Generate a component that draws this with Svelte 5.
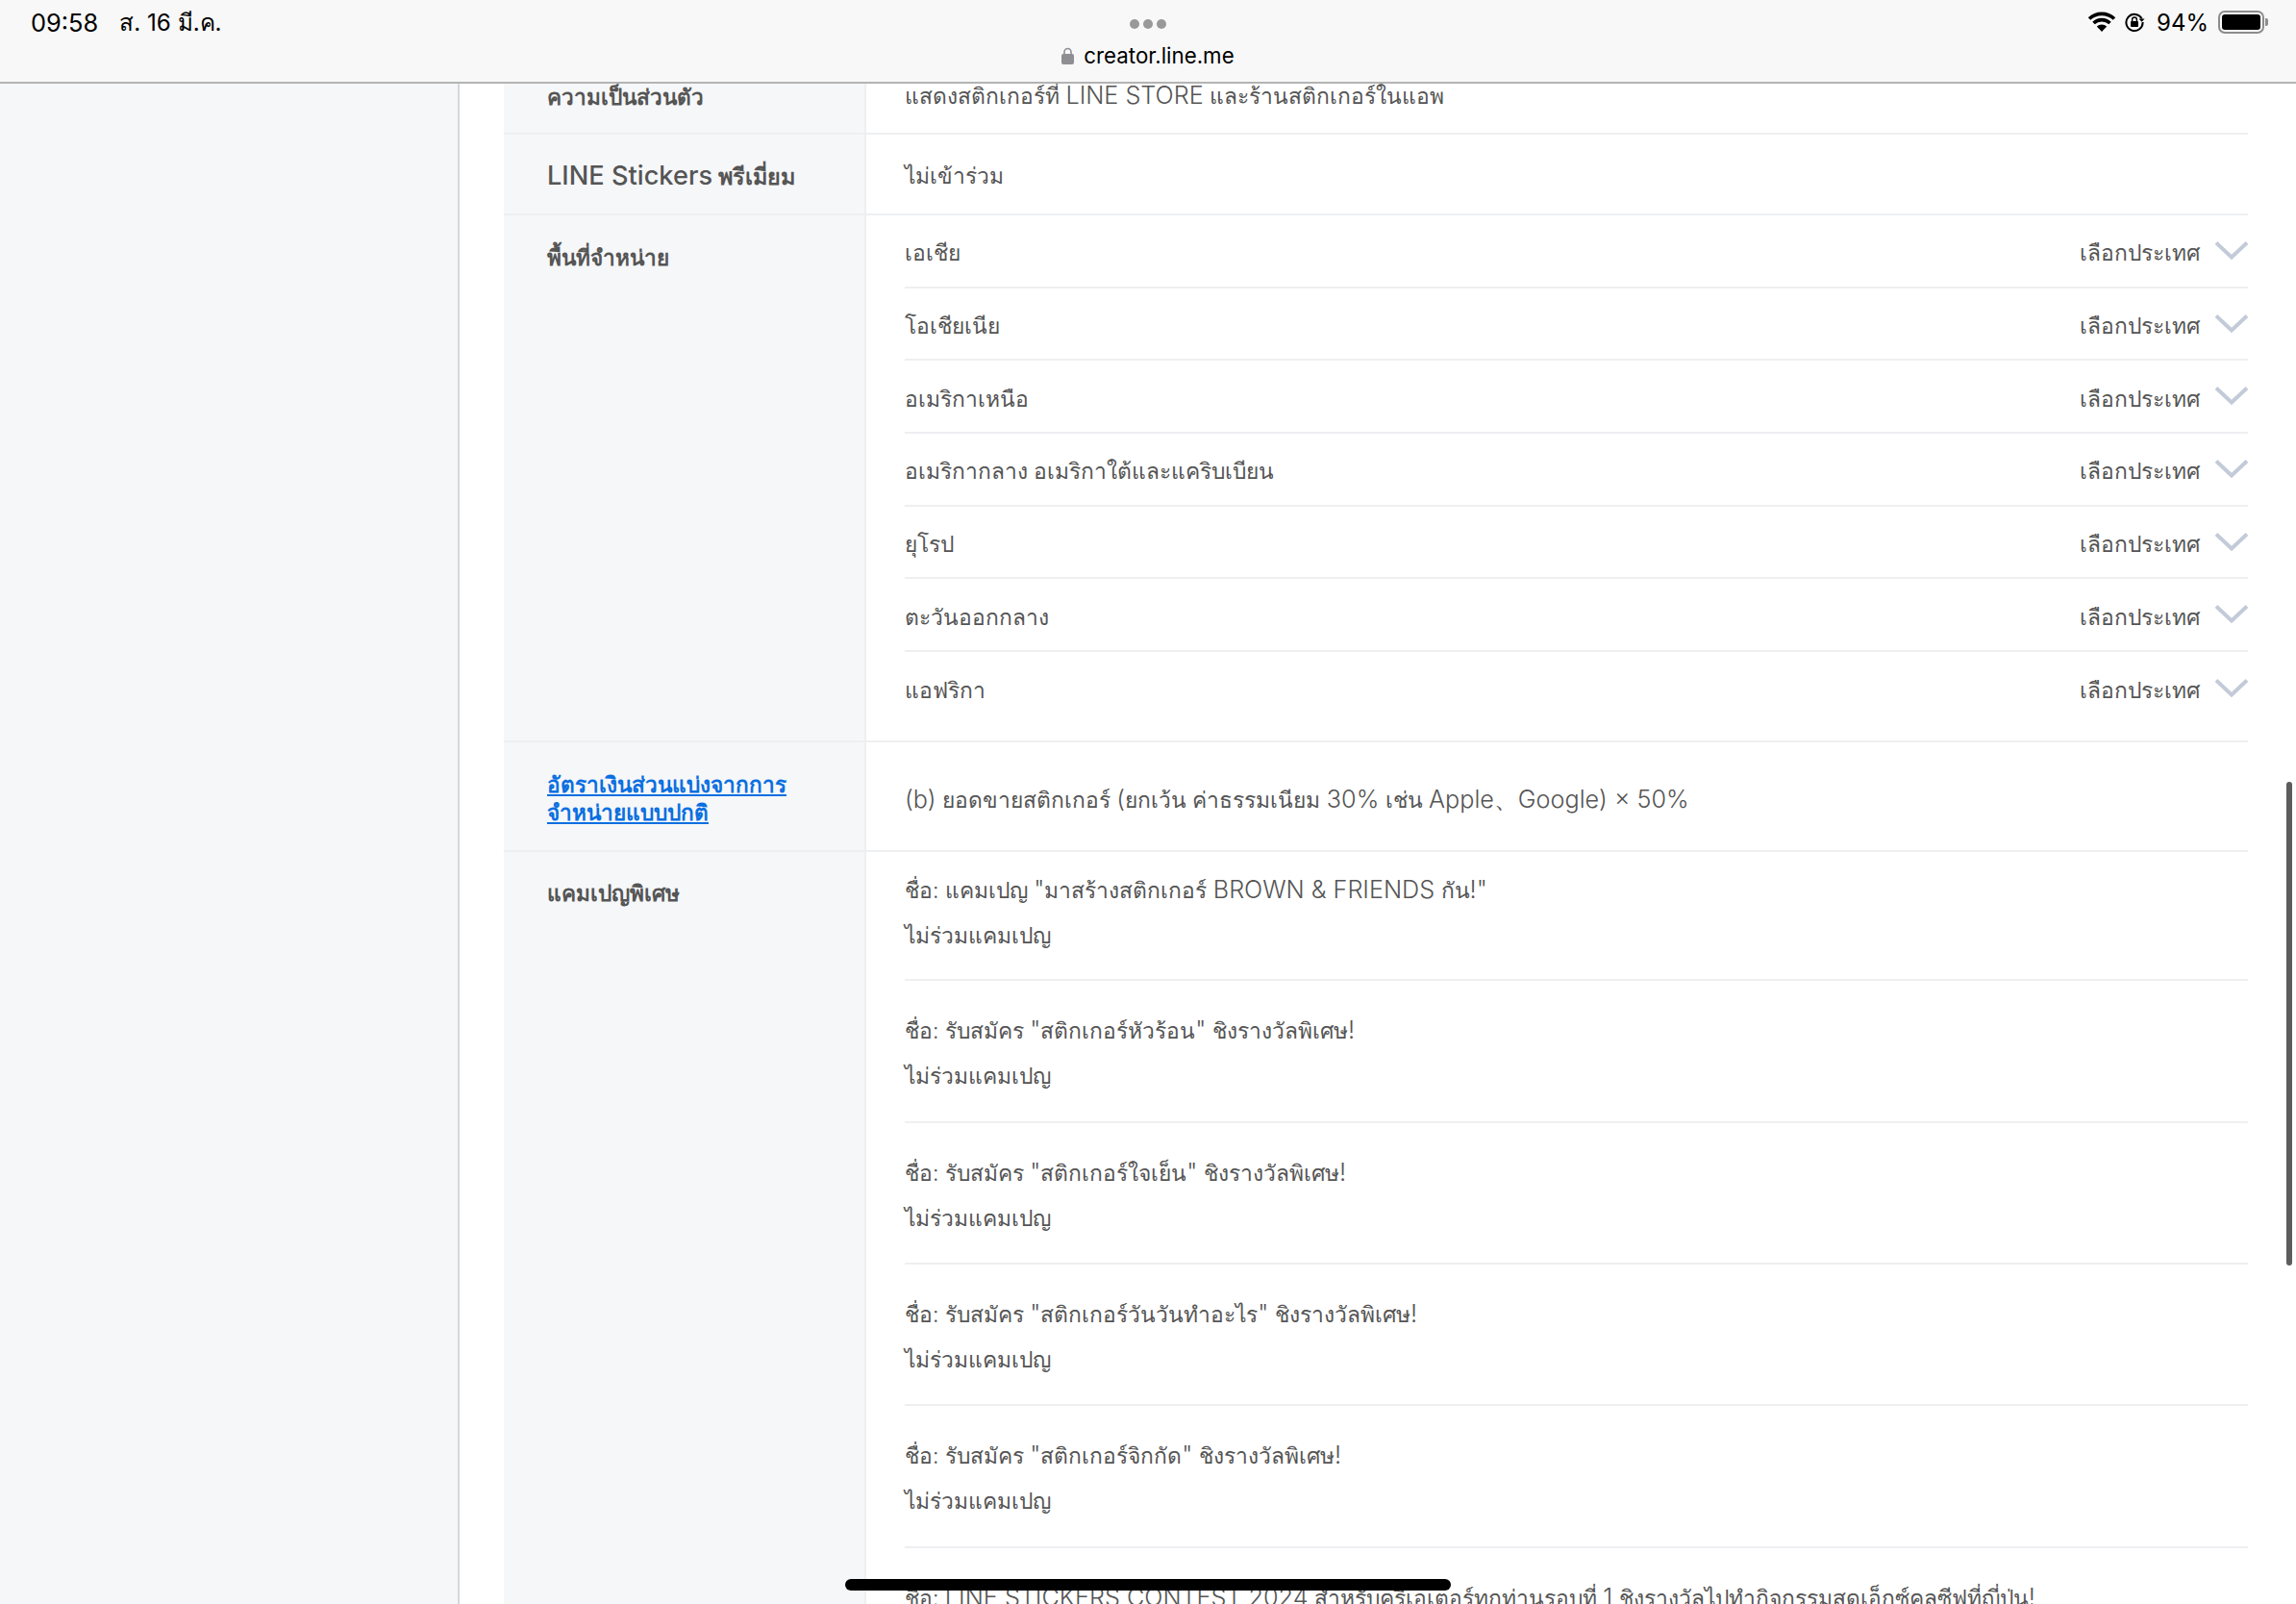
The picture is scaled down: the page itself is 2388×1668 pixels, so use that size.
<script>
  const regions = [
    "เอเชีย",
    "โอเชียเนีย",
    "อเมริกาเหนือ",
    "อเมริกากลาง อเมริกาใต้และแคริบเบียน",
    "ยุโรป",
    "ตะวันออกกลาง",
    "แอฟริกา",
  ];
  const campaigns = [
    'ชื่อ: แคมเปญ "มาสร้างสติกเกอร์ BROWN & FRIENDS กัน!"',
    'ชื่อ: รับสมัคร "สติกเกอร์หัวร้อน" ชิงรางวัลพิเศษ!',
    'ชื่อ: รับสมัคร "สติกเกอร์ใจเย็น" ชิงรางวัลพิเศษ!',
    'ชื่อ: รับสมัคร "สติกเกอร์วันวันทำอะไร" ชิงรางวัลพิเศษ!',
    'ชื่อ: รับสมัคร "สติกเกอร์จิกกัด" ชิงรางวัลพิเศษ!',
    "ชื่อ: LINE STICKERS CONTEST 2024 สำหรับครีเอเตอร์ทุกท่านรอบที่ 1 ชิงรางวัลไปทำกิจกรรมสุดเอ็กซ์คลูซีฟที่ญี่ปุ่น!",
  ];

  // latin runs sit larger than the thai around them
  const split = (text) =>
    text.split(/([A-Za-z0-9%&()×"!、]+(?: [A-Za-z0-9%&()×"!、]+)*)/);
</script>

{#snippet mixed(text)}
  <span>
    {#each split(text) as part, i}{#if i % 2}<span class="en">{part}</span>{:else}{part}{/if}{/each}
  </span>
{/snippet}

<div class="screen">
  <header class="topbar">
    <div class="status">
      <span class="time">09:58</span>
      <span class="date">ส. 16 มี.ค.</span>
      <span class="right">
        <svg width="30" height="24" viewBox="0 0 30 24">
          <path d="M2 8.5a19 19 0 0 1 26 0M6.5 13a12.5 12.5 0 0 1 17 0" fill="none" stroke="#000" stroke-width="3.6" />
          <path d="M15 22l-5.2-5.4a7.4 7.4 0 0 1 10.4 0z" fill="#000" />
        </svg>
        <svg width="22" height="22" viewBox="0 0 22 22">
          <path d="M18.6 7.4A8.6 8.6 0 1 0 19.6 11" fill="none" stroke="#000" stroke-width="2" />
          <path d="M21.6 7.4h-6l3 3.4z" fill="#000" />
          <rect x="7" y="10" width="8" height="6" rx="1" fill="#000" />
          <path d="M8.6 10V8.4a2.4 2.4 0 0 1 4.8 0V10" fill="none" stroke="#000" stroke-width="1.4" />
        </svg>
        <span class="pct">94%</span>
        <span class="battery"><span class="level"></span></span>
        <span class="nub"></span>
      </span>
    </div>
    <div class="dots"><i></i><i></i><i></i></div>
    <div class="url">
      <svg width="13" height="18" viewBox="0 0 13 18">
        <path d="M3 8V5a3.5 3.5 0 0 1 7 0v3" fill="none" stroke="#8e8e93" stroke-width="1.6" />
        <rect x="0" y="7" width="13" height="11" rx="2" fill="#8e8e93" />
      </svg>
      <span>creator.line.me</span>
    </div>
  </header>

  <div class="page">
    <aside class="sidebar"></aside>
    <main class="content">
      <div class="table">
        <div class="row first">
          <div class="th">ความเป็นส่วนตัว</div>
          <div class="td">{@render mixed("แสดงสติกเกอร์ที่ LINE STORE และร้านสติกเกอร์ในแอพ")}</div>
        </div>
        <div class="row premium">
          <div class="th"><span><span class="latin">LINE Stickers</span> พรีเมี่ยม</span></div>
          <div class="td">ไม่เข้าร่วม</div>
        </div>
        <div class="row">
          <div class="th top">พื้นที่จำหน่าย</div>
          <div class="td list">
            {#each regions as region}
              <div class="region">
                <span>{region}</span>
                <span class="pick">เลือกประเทศ</span>
                <svg class="chev" width="34" height="20" viewBox="0 0 34 20">
                  <path d="M1 1.5l16 15 16-15" fill="none" stroke="#c3cad8" stroke-width="4" />
                </svg>
              </div>
            {/each}
          </div>
        </div>
        <div class="row share">
          <div class="th"><a href="#share">อัตราเงินส่วนแบ่งจากการ<br />จำหน่ายแบบปกติ</a></div>
          <div class="td">{@render mixed("(b) ยอดขายสติกเกอร์ (ยกเว้น ค่าธรรมเนียม 30% เช่น Apple、Google) × 50%")}</div>
        </div>
        <div class="row">
          <div class="th top">แคมเปญพิเศษ</div>
          <div class="td list">
            {#each campaigns as name}
              <div class="campaign">
                <p>{@render mixed(name)}</p>
                <p>ไม่ร่วมแคมเปญ</p>
              </div>
            {/each}
          </div>
        </div>
      </div>
    </main>
  </div>

  <div class="scrollbar"></div>
  <div class="homebar"></div>
</div>

<style>
  :global(body) {
    margin: 0;
    background: #fff;
  }

  .screen {
    position: relative;
    width: 2388px;
    height: 1668px;
    overflow: hidden;
    display: flex;
    flex-direction: column;
    font-family: Inter, "Liberation Sans", sans-serif;
    color: #555;
  }

  .topbar {
    height: 87px;
    flex: none;
    box-sizing: border-box;
    background: #f8f8f8;
    border-bottom: 2px solid #b4b4b4;
    color: #000;
    position: relative;
    z-index: 1;
  }

  .status {
    display: flex;
    align-items: center;
    height: 24px;
    padding: 11px 29px 0 32px;
    font-size: 24px;
  }

  .time {
    font-size: 25.4px;
  }

  .date {
    margin-left: 22px;
    font-size: 24.2px;
  }

  .right {
    margin-left: auto;
    display: flex;
    align-items: center;
    gap: 8px;
  }

  .pct {
    margin: 0 2px 0 4px;
  }

  .battery {
    box-sizing: border-box;
    width: 48px;
    height: 24px;
    border: 2px solid #8d8d8d;
    border-radius: 7px;
    padding: 2px;
    display: block;
  }

  .level {
    display: block;
    height: 100%;
    background: #000;
    border-radius: 3px;
  }

  .nub {
    width: 3px;
    height: 8px;
    margin-left: -7px;
    background: #8d8d8d;
    border-radius: 0 2px 2px 0;
  }

  .dots {
    display: flex;
    justify-content: center;
    gap: 4px;
    margin-top: -15px;
    height: 10px;
  }

  .dots i {
    width: 10px;
    height: 10px;
    border-radius: 50%;
    background: #999;
  }

  .url {
    display: flex;
    justify-content: center;
    align-items: center;
    gap: 10px;
    margin-top: 13px;
    font-size: 22.3px;
    line-height: 30px;
  }

  .page {
    flex: 1;
    display: flex;
    min-height: 0;
  }

  .sidebar {
    width: 476px;
    flex: none;
    background: #f6f7f9;
    border-right: 2px solid #d5d8de;
  }

  .content {
    flex: 1;
    padding: 0 50px 0 46px;
    overflow: hidden;
  }

  .table {
    margin-top: -25px;
  }

  .row {
    display: grid;
    grid-template-columns: 377px 1fr;
    border-bottom: 2px solid #eeeff1;
  }

  .th {
    background: #f6f7f9;
    border-right: 2px solid #eeeff1;
    padding: 0 45px;
    font-size: 22.6px;
    font-weight: 700;
    line-height: 29px;
    display: flex;
    align-items: center;
  }

  .th.top {
    align-items: flex-start;
    padding-top: 28.5px;
  }

  .latin {
    font-size: 27.2px;
    font-weight: 500;
  }

  .th a {
    color: #0a6fe0;
    text-decoration: underline;
  }

  .td {
    padding: 3px 0 0 40px;
    font-size: 22.8px;
    font-weight: 300;
    display: flex;
    align-items: center;
  }

  .en {
    font-size: 25.2px;
  }

  .first {
    height: 76px;
  }

  .first .td {
    padding-top: 0;
  }

  .premium {
    height: 82px;
  }

  .premium .th {
    padding-top: 3px;
    font-size: 23.4px;
  }

  .share {
    height: 112px;
  }

  .share .th {
    padding-top: 4px;
  }

  .share .td {
    padding-top: 8px;
  }

  .list {
    display: block;
    padding: 0 0 16px 40px;
  }

  .region {
    height: 75.7px;
    box-sizing: border-box;
    padding-top: 5px;
    display: flex;
    align-items: center;
    border-bottom: 2px solid #eeeff1;
  }

  .region:last-child {
    border-bottom: 0;
  }

  .pick {
    margin-left: auto;
    margin-right: 16px;
  }

  .chev {
    margin-bottom: 5px;
  }

  .campaign {
    height: 147.4px;
    box-sizing: border-box;
    padding-top: 27px;
    border-bottom: 2px solid #eeeff1;
  }

  .campaign:first-child {
    height: 134.5px;
    padding-top: 15.5px;
  }

  .campaign p {
    margin: 0;
    line-height: 48px;
    height: 48px;
  }

  .scrollbar {
    position: absolute;
    left: 2378px;
    top: 813px;
    width: 6px;
    height: 503px;
    border-radius: 3px;
    background: #5d5d5d;
  }

  .homebar {
    position: absolute;
    left: 879px;
    top: 1642px;
    width: 630px;
    height: 12px;
    border-radius: 6px;
    background: #000;
  }
</style>
